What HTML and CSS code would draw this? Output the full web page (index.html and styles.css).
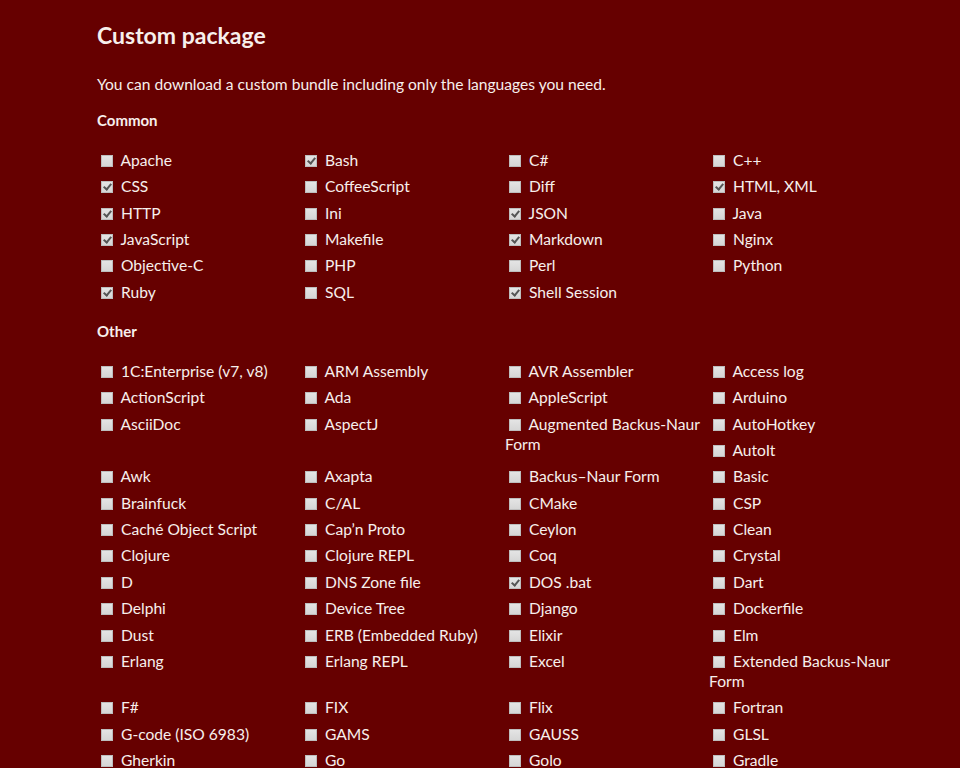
FILE: index.html
```html
<!DOCTYPE html>
<html lang="en">
<head>
<meta charset="utf-8">
<title>Custom package</title>
<link rel="stylesheet" href="styles.css">
</head>
<body>
<div class="page">
  <h1 class="title">Custom package</h1>
  <p class="intro">You can download a custom bundle including only the languages you need.</p>

  <h3 class="group">Common</h3>
  <ul class="langs">
    <li><input type="checkbox"> Apache</li>
    <li><input type="checkbox" checked> Bash</li>
    <li><input type="checkbox"> C#</li>
    <li><input type="checkbox"> C++</li>
    <li><input type="checkbox" checked> CSS</li>
    <li><input type="checkbox"> CoffeeScript</li>
    <li><input type="checkbox"> Diff</li>
    <li><input type="checkbox" checked> HTML, XML</li>
    <li><input type="checkbox" checked> HTTP</li>
    <li><input type="checkbox"> Ini</li>
    <li><input type="checkbox" checked> JSON</li>
    <li><input type="checkbox"> Java</li>
    <li><input type="checkbox" checked> JavaScript</li>
    <li><input type="checkbox"> Makefile</li>
    <li><input type="checkbox" checked> Markdown</li>
    <li><input type="checkbox"> Nginx</li>
    <li><input type="checkbox"> Objective-C</li>
    <li><input type="checkbox"> PHP</li>
    <li><input type="checkbox"> Perl</li>
    <li><input type="checkbox"> Python</li>
    <li><input type="checkbox" checked> Ruby</li>
    <li><input type="checkbox"> SQL</li>
    <li><input type="checkbox" checked> Shell Session</li>
  </ul>

  <h3 class="group">Other</h3>
  <ul class="langs">
    <li><input type="checkbox"> 1C:Enterprise (v7, v8)</li>
    <li><input type="checkbox"> ARM Assembly</li>
    <li><input type="checkbox"> AVR Assembler</li>
    <li><input type="checkbox"> Access log</li>
    <li><input type="checkbox"> ActionScript</li>
    <li><input type="checkbox"> Ada</li>
    <li><input type="checkbox"> AppleScript</li>
    <li><input type="checkbox"> Arduino</li>
    <li><input type="checkbox"> AsciiDoc</li>
    <li><input type="checkbox"> AspectJ</li>
    <li><input type="checkbox"> Augmented Backus-Naur Form</li>
    <li><input type="checkbox"> AutoHotkey</li>
    <li><input type="checkbox"> AutoIt</li>
    <li><input type="checkbox"> Awk</li>
    <li><input type="checkbox"> Axapta</li>
    <li><input type="checkbox"> Backus–Naur Form</li>
    <li><input type="checkbox"> Basic</li>
    <li><input type="checkbox"> Brainfuck</li>
    <li><input type="checkbox"> C/AL</li>
    <li><input type="checkbox"> CMake</li>
    <li><input type="checkbox"> CSP</li>
    <li><input type="checkbox"> Caché Object Script</li>
    <li><input type="checkbox"> Cap’n Proto</li>
    <li><input type="checkbox"> Ceylon</li>
    <li><input type="checkbox"> Clean</li>
    <li><input type="checkbox"> Clojure</li>
    <li><input type="checkbox"> Clojure REPL</li>
    <li><input type="checkbox"> Coq</li>
    <li><input type="checkbox"> Crystal</li>
    <li><input type="checkbox"> D</li>
    <li><input type="checkbox"> DNS Zone file</li>
    <li><input type="checkbox" checked> DOS .bat</li>
    <li><input type="checkbox"> Dart</li>
    <li><input type="checkbox"> Delphi</li>
    <li><input type="checkbox"> Device Tree</li>
    <li><input type="checkbox"> Django</li>
    <li><input type="checkbox"> Dockerfile</li>
    <li><input type="checkbox"> Dust</li>
    <li><input type="checkbox"> ERB (Embedded Ruby)</li>
    <li><input type="checkbox"> Elixir</li>
    <li><input type="checkbox"> Elm</li>
    <li><input type="checkbox"> Erlang</li>
    <li><input type="checkbox"> Erlang REPL</li>
    <li><input type="checkbox"> Excel</li>
    <li><input type="checkbox"> Extended Backus-Naur Form</li>
    <li><input type="checkbox"> F#</li>
    <li><input type="checkbox"> FIX</li>
    <li><input type="checkbox"> Flix</li>
    <li><input type="checkbox"> Fortran</li>
    <li><input type="checkbox"> G-code (ISO 6983)</li>
    <li><input type="checkbox"> GAMS</li>
    <li><input type="checkbox"> GAUSS</li>
    <li><input type="checkbox"> GLSL</li>
    <li><input type="checkbox"> Gherkin</li>
    <li><input type="checkbox"> Go</li>
    <li><input type="checkbox"> Golo</li>
    <li><input type="checkbox"> Gradle</li>
  </ul>
</div>
</body>
</html>
```
FILE: styles.css
```css
html, body {
  margin: 0;
  padding: 0;
  background: #660000;
}

body {
  color: #f7efec;
  font-family: Lato, "Liberation Sans", sans-serif;
  font-size: 15.6px;
  line-height: 20px;
}

.page {
  width: 816px;
  margin-left: 97px;
  padding-top: 20px;
}

.title {
  margin: 0;
  font-size: 23px;
  line-height: 30px;
  font-weight: bold;
}

.intro {
  margin: 24px 0 16px;
}

.group {
  margin: 13px 0 0;
  font-size: 15px;
  font-weight: bold;
  line-height: 20px;
}

.langs {
  display: flow-root;
  list-style: none;
  margin: 20px 0 0;
  padding: 0;
}

.langs li {
  float: left;
  width: 25%;
  margin-bottom: 6.35px;
  line-height: 20px;
}

.langs input {
  -webkit-appearance: none;
  appearance: none;
  box-sizing: border-box;
  width: 12px;
  height: 12px;
  margin: 0 4px 0 4px;
  vertical-align: -1px;
  border: 1px solid #bdbdbd;
  background: linear-gradient(#e4e4e4, #d6d6d6);
  position: relative;
}

.langs input:checked::after {
  content: "";
  position: absolute;
  left: 3px;
  top: 0;
  width: 3px;
  height: 6px;
  border: solid #555;
  border-width: 0 2px 2px 0;
  transform: rotate(40deg);
}
```
